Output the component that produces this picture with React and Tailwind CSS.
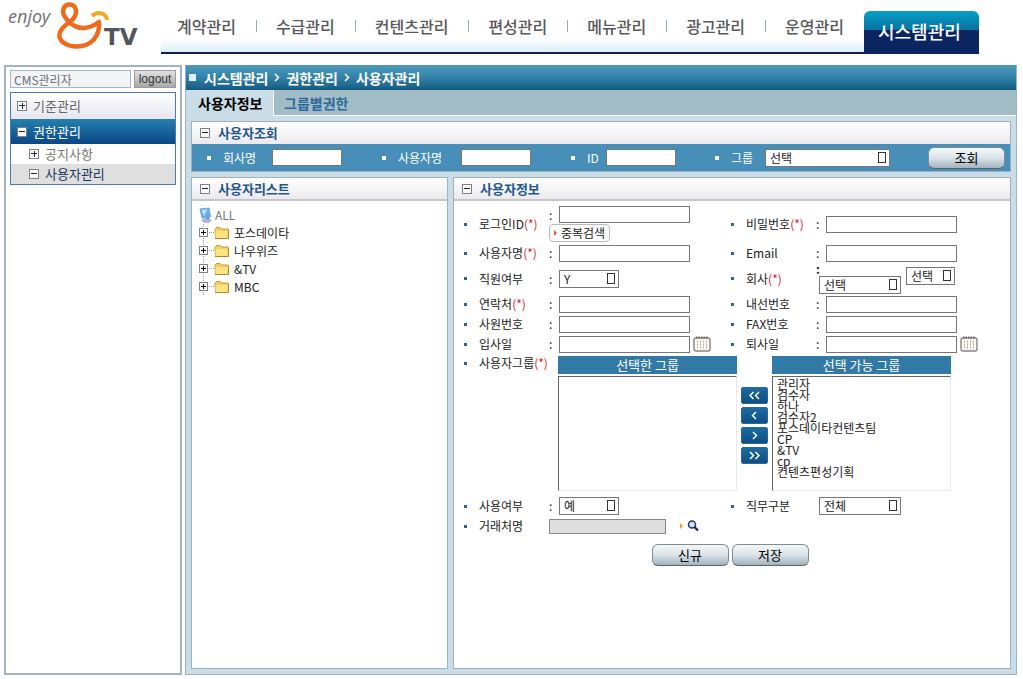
import React from "react";

const NAV = ["계약관리", "수급관리", "컨텐츠관리", "편성관리", "메뉴관리", "광고관리", "운영관리"];
const GROUPS = ["관리자", "검수자", "하나", "검수자2", "포스데이타컨텐츠팀", "CP", "&TV", "cp", "컨텐츠편성기획"];
const TREE = ["포스데이타", "나우위즈", "&TV", "MBC"];

function Logo() {
  return (
    <svg width="160" height="54" viewBox="0 0 160 54" role="img" aria-label="enjoy &TV">
      <text x="8" y="23" fontFamily="Noto Sans, sans-serif" fontSize="18" fontStyle="italic" fill="#77787c">enjoy</text>
      <path
        d="M99 22C100 37 91 46 77 46.500C65 46.500 58.500 40 59.500 34C60.500 27 68 24 73 19C78 13 76.500 4.500 69.500 4.500C63 4.500 61.500 12 65 17C69 24 77 28.500 84 28C91 27.500 95 25 99 22Z"
        fill="none"
        stroke="#ee6a1c"
        strokeWidth="4.500"
        strokeLinejoin="round"
      />
      <path d="M92 16C97 11 105 12 107.500 20" fill="none" stroke="#f7a823" strokeWidth="4" />
      <text x="104" y="45" fontFamily="DejaVu Sans, sans-serif" fontSize="23" fontWeight="700" fill="#55565a">TV</text>
    </svg>
  );
}

function Toggle({ plus = false, className = "" }) {
  return (
    <svg width="10" height="10" viewBox="0 0 10 10" className={`shrink-0 ${className}`} aria-hidden="true" shapeRendering="crispEdges">
      <rect x="0.5" y="0.5" width="9" height="9" fill="#fff" stroke="#7d8288" />
      <path d={plus ? "M2 5h6M5 2v6" : "M2 5h6"} transform="translate(0 -0.500)" stroke="#222" fill="none" />
    </svg>
  );
}

function Select({ label, options, className }) {
  return (
    <span className={`relative inline-block h-[18px] shrink-0 ${className}`}>
      <select
        aria-label={label}
        className="block h-full w-full appearance-none border border-[#777] bg-white px-1 text-xs leading-4 text-[#222] outline-none"
      >
        {options.map((o) => (
          <option key={o}>{o}</option>
        ))}
      </select>
      <svg width="8" height="11" viewBox="0 0 8 11" className="pointer-events-none absolute right-1 top-[3px]" aria-hidden="true" shapeRendering="crispEdges">
        <rect x="0.500" y="0.500" width="7" height="10" fill="none" stroke="#333" />
      </svg>
    </span>
  );
}

function CalendarButton({ label }) {
  return (
    <button type="button" aria-label={label} className="ml-[3px] shrink-0">
      <svg width="18" height="16" viewBox="0 0 18 16" aria-hidden="true">
        <rect x="1" y="2" width="16" height="13" rx="2" fill="#fbf9f4" stroke="#8a8580" strokeWidth="1.400" />
        <path d="M3 1.500h12" stroke="#6d6864" strokeWidth="2" strokeDasharray="1.500 1" />
        <path d="M4.500 4.500v8M7.500 4.500v8M10.500 4.500v8M13.500 4.500v8" stroke="#b9a698" strokeDasharray="2 1" />
      </svg>
    </button>
  );
}

function TextField({ id }) {
  return <input id={id} type="text" className="h-[17px] w-[131px] shrink-0 border border-[#777] bg-white px-1 text-xs outline-none" />;
}

function Field({ label, id, required = false, colon = true, children }) {
  return (
    <div className="flex h-full items-center">
      <span className="mr-3 size-[3px] shrink-0 bg-[#2f6096]" />
      <label htmlFor={id} className="w-[70px] shrink-0 whitespace-nowrap">
        {label}
        {required && <span className="text-[#e0202c]">(*)</span>}
      </label>
      {colon && <span className="w-[10px] shrink-0">:</span>}
      {children}
    </div>
  );
}

function PanelTitle({ children, className = "" }) {
  return (
    <h2 className={`flex items-center gap-2 bg-linear-to-b from-white to-[#ebe9ec] pl-2 text-[13px] font-bold text-[#23578f] ${className}`}>
      <Toggle />
      {children}
    </h2>
  );
}

function SearchLabel({ id, children, className }) {
  return (
    <label htmlFor={id} className={`flex shrink-0 items-center gap-3 whitespace-nowrap text-white ${className}`}>
      <span className="size-1 bg-white" />
      {children}
    </label>
  );
}

function PillButton({ children, className = "" }) {
  return (
    <button
      type="button"
      className={`h-[22px] w-[77px] rounded-md border border-[#7d8e98] border-b-[#56666f] bg-linear-to-b from-[#f4f7f8] via-[#dbe3e8] to-[#a3b3bd] text-[13px] leading-5 text-black ${className}`}
    >
      {children}
    </button>
  );
}

function Folder() {
  return (
    <svg width="16" height="14" viewBox="0 0 16 14" aria-hidden="true">
      <path d="M1 3.500L2.500 1.500H6L7.500 3H13.500Q14.500 3 14.500 4V12H1.500Z" fill="#f2d160" stroke="#c39a2c" />
      <path d="M1.500 5H13.500V12H1.500Z" fill="#fbe583" />
      <path d="M1 12.500H14.500V4" fill="none" stroke="#b58a24" />
    </svg>
  );
}

function Computer() {
  return (
    <svg width="13" height="16" viewBox="0 0 13 16" aria-hidden="true">
      <path d="M1 2L10 1L11.500 10L3 11Z" fill="#5ab0f2" stroke="#7aa6d8" />
      <path d="M2.500 3L8.500 2.300L5 9Z" fill="#c2e6ff" />
      <path d="M6 11L10 10.500V13Z" fill="#5a7fc0" />
      <ellipse cx="7.500" cy="13.500" rx="4.500" ry="1.800" fill="#b9b6d8" stroke="#8b88b8" strokeWidth=".6" />
    </svg>
  );
}

function Crumb() {
  return (
    <svg width="6" height="9" viewBox="0 0 6 9" aria-hidden="true">
      <path d="M1 1L4.500 4.500L1 8" fill="none" stroke="#fff" strokeWidth="1.500" />
    </svg>
  );
}

function Chevrons({ left = false, double = false }) {
  return (
    <svg width="13" height="9" viewBox="0 0 13 9" aria-hidden="true" className={left ? "-scale-x-100" : ""}>
      <path d={double ? "M2 1L5.500 4.500L2 8M7.500 1L11 4.500L7.500 8" : "M5 1L8.500 4.500L5 8"} fill="none" stroke="#fff" strokeWidth="1.500" />
    </svg>
  );
}

function MoveButton({ label, left, double }) {
  return (
    <button
      type="button"
      aria-label={label}
      className="flex h-[17px] w-[27px] items-center justify-center rounded-xs border border-[#2c6894] bg-linear-to-b from-[#1a6ba1] to-[#0e4f84]"
    >
      <Chevrons left={left} double={double} />
    </button>
  );
}

function GroupList({ title, options }) {
  return (
    <div className="w-[179px] shrink-0">
      <div className="mb-[2px] h-[18px] bg-[#327aa6] text-center text-[13px] leading-[17px] text-white">{title}</div>
      <select
        multiple
        aria-label={title}
        className="block h-[115px] w-full appearance-none overflow-hidden border border-l-[#666] border-t-[#666] border-r-[#e8e8e8] border-b-[#e8e8e8] bg-white py-px pl-[2px] text-xs text-[#222] outline-none"
      >
        {options.map((o) => (
          <option key={o} className="flex h-[11px] min-h-0 items-center overflow-visible p-0 pl-[2px]">
            {o}
          </option>
        ))}
      </select>
    </div>
  );
}

export default function App() {
  return (
    <div className="flex min-h-screen flex-col bg-white pb-1 font-['Noto_Sans_CJK_KR','Liberation_Sans',sans-serif] text-xs text-[#222]">
      <header className="flex h-[54px] items-end">
        <div className="w-[161px] shrink-0">
          <Logo />
        </div>
        <nav className="flex h-[54px] items-end border-b-2 border-[#0e2048] bg-linear-to-b from-white from-75% to-[#dceef8]">
          {NAV.map((n, i) => (
            <a key={n} href="#" className="flex h-[52px] items-center whitespace-nowrap text-base font-medium text-[#58585c]">
              <span className={i === 0 ? "pl-4 pr-5" : "pl-[19px] pr-5"}>{n}</span>
              {i < NAV.length - 1 && <span className="h-3 w-px bg-[#8fb0c2]" />}
            </a>
          ))}
          <a
            href="#"
            className="-mb-[2px] flex h-[43px] w-[115px] items-center rounded-t-md bg-linear-to-b from-[#06a0c8] via-[#08709f] via-45% to-[#0a2560] to-45% pb-1 pl-[14px] text-lg font-medium whitespace-nowrap text-white"
          >
            시스템관리
          </a>
        </nav>
      </header>

      <div className="mt-[11px] flex flex-1 gap-[3px] pl-1 pr-[6px]">
        <aside className="w-[178px] shrink-0 border-2 border-[#a3b3bf] px-[4px] pt-[3px]">
          <div className="flex gap-[3px]">
            <input
              aria-label="사용자"
              readOnly
              value="CMS관리자"
              className="h-[18px] w-[121px] border border-[#a3b6c4] bg-[#f3f4f6] px-[3px] text-xs text-[#6b6f76] outline-none"
            />
            <button
              type="button"
              className="h-[18px] flex-1 border border-[#9c9c9c] bg-linear-to-b from-[#e2e2e2] to-[#a9a9a9] font-['Liberation_Sans',sans-serif] text-xs leading-4 text-[#333]"
            >
              logout
            </button>
          </div>
          <ul className="mt-1 border border-[#4c7cab] text-[13px]">
            <li>
              <a href="#" className="flex h-[26px] items-center gap-[6px] bg-linear-to-b from-white to-[#e6e5ee] pl-[6px] text-[#666]">
                <Toggle plus />
                기준관리
              </a>
            </li>
            <li>
              <a href="#" className="flex h-[25px] items-center gap-[6px] bg-linear-to-b from-[#2580ae] to-[#0b4785] pl-[6px] text-white">
                <Toggle />
                권한관리
              </a>
            </li>
            <li>
              <a href="#" className="flex h-[20px] items-center gap-[6px] pl-[18px] text-[#777]">
                <Toggle plus />
                공지사항
              </a>
            </li>
            <li>
              <a href="#" className="flex h-[20px] items-center gap-[6px] bg-[#dfdfe0] pl-[18px] text-[#1c3557]">
                <Toggle />
                사용자관리
              </a>
            </li>
          </ul>
        </aside>

        <main className="flex min-w-0 flex-1 flex-col border border-t-0 border-[#9db3c0] bg-[#cadce6]">
          <div className="flex h-[25px] shrink-0 items-center gap-[6px] bg-linear-to-b from-[#4d9bbb] via-[#3382a8] to-[#135a80] pl-[3px] text-sm font-bold text-white">
            <span className="mr-[2px] size-[7px] bg-[#dff0f6]" />
            <span>시스템관리</span>
            <Crumb />
            <span>권한관리</span>
            <Crumb />
            <span>사용자관리</span>
          </div>
          <div className="flex h-[26px] shrink-0 border-b border-white bg-[#a3bdc7] text-sm font-bold">
            <a href="#" className="-mb-px flex w-[88px] items-center border-r border-white bg-[#cadce6] pl-3 text-black">
              사용자정보
            </a>
            <a href="#" className="flex items-center pl-[10px] text-[#2a6a99]">
              그룹별권한
            </a>
          </div>

          <div className="flex flex-1 flex-col gap-[5px] px-[5px] pt-[5px] pb-[5px]">
            <section className="border border-[#9db3c0]">
              <PanelTitle className="h-[22px]">사용자조회</PanelTitle>
              <div className="flex h-[27px] items-center bg-[#478fb9]">
                <SearchLabel id="s-company" className="w-[80px] pl-[15px]">회사명</SearchLabel>
                <input id="s-company" className="h-[17px] w-[70px] border border-[#777] bg-white px-1" />
                <SearchLabel id="s-user" className="w-[119px] pl-[40px]">사용자명</SearchLabel>
                <input id="s-user" className="h-[17px] w-[70px] border border-[#777] bg-white px-1" />
                <SearchLabel id="s-id" className="w-[75px] pl-[40px]">ID</SearchLabel>
                <input id="s-id" className="h-[17px] w-[70px] border border-[#777] bg-white px-1" />
                <SearchLabel id="s-group" className="w-[89px] pl-[39px]">그룹</SearchLabel>
                <Select label="그룹" options={["선택"]} className="w-[125px]" />
                <PillButton className="mr-[5px] ml-auto">조회</PillButton>
              </div>
            </section>

            <div className="flex flex-1 gap-[5px]">
              <section className="w-[257px] shrink-0 border border-[#9db3c0] bg-white">
                <PanelTitle className="h-[23px] border-b-2 border-[#c3c6cb]">사용자리스트</PanelTitle>
                <div className="pt-[5px] pl-[7px]">
                  <div className="flex h-[18px] items-center gap-[3px] text-[#777]">
                    <Computer />
                    ALL
                  </div>
                  <ul>
                    {TREE.map((t) => (
                      <li key={t} className="flex h-[18px] items-center">
                        <svg width="15" height="18" viewBox="0 0 15 18" aria-hidden="true" shapeRendering="crispEdges">
                          <path d="M4.500 0V18M10 8.500H15" stroke="#999" strokeDasharray="1 1" />
                          <rect x="0.500" y="4.500" width="8" height="8" fill="#fff" stroke="#7d8288" />
                          <path d="M2 8.500h5M4.500 6v5" stroke="#000" />
                        </svg>
                        <Folder />
                        <span className="pl-1">{t}</span>
                      </li>
                    ))}
                  </ul>
                </div>
              </section>

              <section className="min-w-0 flex-1 border border-[#9db3c0] bg-white">
                <PanelTitle className="h-[23px] border-b-2 border-[#c3c6cb]">사용자정보</PanelTitle>
                <form className="pt-[4px] pl-[10px]">
                  <div className="grid grid-cols-[267px_1fr] grid-rows-[38px_20px_31px_20px_20px_20px]">
                    <Field label="로그인ID" id="f-login" required colon={false}>
                      <div className="flex flex-col items-start">
                        <div className="flex items-center leading-[17px]">
                          <span className="w-[10px]">:</span>
                          <TextField id="f-login" />
                        </div>
                        <button type="button" className="mt-px flex h-[18px] items-center gap-1 rounded-sm border border-[#bbb] bg-white px-1 text-xs leading-4">
                          <svg width="3" height="6" viewBox="0 0 3 6" aria-hidden="true">
                            <path d="M0 0L3 3L0 6Z" fill="#e2592b" />
                          </svg>
                          <span>중복검색</span>
                        </button>
                      </div>
                    </Field>
                    <Field label="비밀번호" id="f-pw" required><TextField id="f-pw" /></Field>

                    <Field label="사용자명" id="f-name" required><TextField id="f-name" /></Field>
                    <Field label="Email" id="f-email"><TextField id="f-email" /></Field>

                    <Field label="직원여부"><Select label="직원여부" options={["Y", "N"]} className="w-[60px]" /></Field>
                    <Field label="회사" required colon={false}>
                      <div className="flex h-full items-start">
                        <span className="w-[3px] leading-3 font-bold">:</span>
                        <Select label="회사" options={["선택"]} className="w-[82px] self-end" />
                        <span className="pt-[4px] pl-[5px] leading-none">
                          <Select label="회사 구분" options={["선택"]} className="w-[49px]" />
                        </span>
                      </div>
                    </Field>

                    <Field label="연락처" id="f-tel" required><TextField id="f-tel" /></Field>
                    <Field label="내선번호" id="f-ext"><TextField id="f-ext" /></Field>

                    <Field label="사원번호" id="f-no"><TextField id="f-no" /></Field>
                    <Field label="FAX번호" id="f-fax"><TextField id="f-fax" /></Field>

                    <Field label="입사일" id="f-in"><TextField id="f-in" /><CalendarButton label="입사일 선택" /></Field>
                    <Field label="퇴사일" id="f-out"><TextField id="f-out" /><CalendarButton label="퇴사일 선택" /></Field>
                  </div>

                  <div className="flex">
                    <div className="h-[18px] w-[94px] shrink-0">
                      <Field label="사용자그룹" required colon={false} />
                    </div>
                    <div className="flex items-start gap-1 pt-[2px]">
                      <GroupList title="선택한 그룹" options={[]} />
                      <div className="flex flex-col gap-[3px] pt-[31px]">
                        <MoveButton label="모두 선택" left double />
                        <MoveButton label="선택" left />
                        <MoveButton label="해제" />
                        <MoveButton label="모두 해제" double />
                      </div>
                      <GroupList title="선택 가능 그룹" options={GROUPS} />
                    </div>
                  </div>

                  <div className="mt-[5px] grid grid-cols-[267px_1fr] grid-rows-[20px_20px]">
                    <Field label="사용여부"><Select label="사용여부" options={["예", "아니오"]} className="w-[60px]" /></Field>
                    <Field label="직무구분" colon={false}>
                      <span className="flex pl-[3px]"><Select label="직무구분" options={["전체"]} className="w-[82px]" /></span>
                    </Field>
                    <Field label="거래처명" id="f-client" colon={false}>
                      <input id="f-client" readOnly className="h-[15px] w-[117px] shrink-0 border border-[#888] bg-[#dedede] px-1" />
                      <button type="button" aria-label="거래처 검색" className="ml-[14px] flex items-center gap-1">
                        <svg width="3" height="6" viewBox="0 0 3 6" aria-hidden="true">
                          <path d="M0 0L3 3L0 6Z" fill="#f0a028" />
                        </svg>
                        <svg width="12" height="12" viewBox="0 0 12 12" aria-hidden="true">
                          <circle cx="5" cy="4.500" r="3.500" fill="#cfe2f6" stroke="#27375c" strokeWidth="1.500" />
                          <path d="M7.500 7L11 10.500" stroke="#14213f" strokeWidth="2.200" />
                        </svg>
                      </button>
                    </Field>
                  </div>

                  <div className="mt-2 flex justify-center gap-[3px] pr-[14px]">
                    <PillButton>신규</PillButton>
                    <PillButton>저장</PillButton>
                  </div>
                </form>
              </section>
            </div>
          </div>
        </main>
      </div>
    </div>
  );
}
